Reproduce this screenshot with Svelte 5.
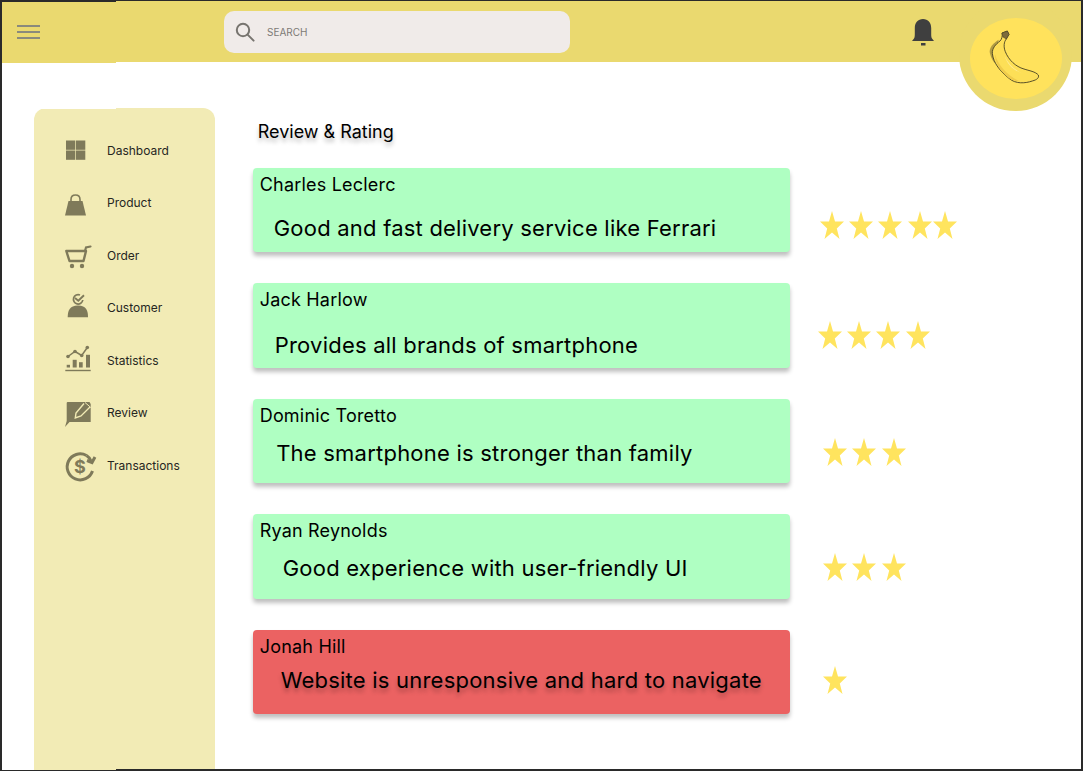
<script>
  const navItems = [
    { label: 'Dashboard', icon: 'grid' },
    { label: 'Product', icon: 'bag' },
    { label: 'Order', icon: 'cart' },
    { label: 'Customer', icon: 'person' },
    { label: 'Statistics', icon: 'chart' },
    { label: 'Review', icon: 'note' },
    { label: 'Transactions', icon: 'money' }
  ];

  // the mockup places every review line and star row by hand, so each one keeps its own offsets
  const reviews = [
    { name: 'Charles Leclerc', text: 'Good and fast delivery service like Ferrari', textX: 14, textY: 19, stars: 5, starsX: 30, starsY: 43 },
    { name: 'Jack Harlow', text: 'Provides all brands of smartphone', textX: 15, textY: 21, stars: 4, starsX: 28, starsY: 38 },
    { name: 'Dominic Toretto', text: 'The smartphone is stronger than family', textX: 16.500, textY: 13, stars: 3, starsX: 33.500, starsY: 39 },
    { name: 'Ryan Reynolds', text: 'Good experience with user-friendly UI', textX: 23, textY: 13, stars: 3, starsX: 33.500, starsY: 39 },
    { name: 'Jonah Hill', text: 'Website is unresponsive and hard to navigate', textX: 21, textY: 9, stars: 1, starsX: 33.500, starsY: 36, bad: true }
  ];
</script>

<div class="frame">
  <header class="topbar">
    <button class="menu" aria-label="Menu">
      <span></span><span></span><span></span>
    </button>
    <div class="search">
      <svg width="20" height="20" viewBox="0 0 20 20" fill="none" stroke="#77746f" stroke-width="2">
        <circle cx="8" cy="8" r="6.2" />
        <path d="M12.6 12.6 L18.6 18.6" stroke-linecap="round" />
      </svg>
      <span>SEARCH</span>
    </div>
    <svg class="bell" width="24" height="28" viewBox="0 0 24 28" fill="#3f3f3f">
      <path d="M1 23 L3 20.5 C3.6 19.5 3.8 18 3.8 16 L3.8 10 C3.8 4.500 7 1 12 1 C17 1 20.200 4.500 20.200 10 L20.200 16 C20.200 18 20.400 19.500 21 20.500 L23 23 Z" />
      <rect x="10" y="25" width="4.500" height="2.500" />
    </svg>
  </header>

  <div class="avatar">
    <div class="avatar-inner">
      <svg width="53.300" height="56.700" viewBox="45 35 160 170">
        <path d="M47 100 C47 85 58 75 74 64 L62 135 C53 122 48 110 47 100 Z" fill="#8f7f3a" opacity="0.7" />
        <path d="M84 44 L100 38 L105 48 L97 62 C90 70 88 85 94 100 C104 125 125 145 150 152 C165 157 185 160 193 170 C196 178 190 184 175 188 C155 195 125 198 105 180 C80 160 58 135 55 105 C54 90 65 78 78 68 C84 62 86 52 84 44 Z" fill="#fddf57" stroke="#3f3a20" stroke-width="2.600" />
        <path d="M63 108 C72 140 100 172 135 188 C115 190 100 176 88 164 C74 148 62 128 63 108 Z" fill="#efcb4b" />
        <path d="M92 112 C102 135 120 155 148 166 C125 160 100 142 92 112 Z" fill="#feeb96" />
        <path d="M84 44 L100 38 L105 48 L97 62 L87 56 Z" fill="#7d6c3c" stroke="#3f3a20" stroke-width="1.500" />
      </svg>
    </div>
  </div>

  <div class="body">
    <aside class="sidebar">
      <nav>
        {#each navItems as item}
          <a href="#top" class="nav-item">
            <svg class="nav-icon" width="30" height="32" viewBox="0 0 30 32" fill="#7f7a5a">
              {#if item.icon === 'grid'}
                <rect x="2" y="6.500" width="9.300" height="9.300" />
                <rect x="12" y="6.500" width="9.300" height="9.300" />
                <rect x="2" y="16.500" width="9.300" height="9.300" />
                <rect x="12" y="16.500" width="9.300" height="9.300" />
              {:else if item.icon === 'bag'}
                <path d="M4.500 14 L18.500 14 L22 28.500 L1 28.500 Z" />
                <path d="M7 15 L7 12.500 C7 9.500 9 8 11.500 8 C14 8 16 9.500 16 12.500 L16 15" fill="none" stroke="#7f7a5a" stroke-width="1.600" />
              {:else if item.icon === 'cart'}
                <path d="M2.300 12 L22 12 L19.500 22 L5.500 22 Z" fill="none" stroke="#7f7a5a" stroke-width="2.400" stroke-linejoin="round" />
                <path d="M21 12 L22 8.500 L26.500 7.500" fill="none" stroke="#7f7a5a" stroke-width="2.200" stroke-linecap="round" />
                <circle cx="8" cy="27" r="2.200" />
                <circle cx="18" cy="27" r="2.200" />
              {:else if item.icon === 'person'}
                <path d="M18.800 8 A4.700 4.700 0 1 1 16 3" fill="none" stroke="#7f7a5a" stroke-width="1.700" />
                <path d="M11 6 L14.300 8.700 L20 3.300" fill="none" stroke="#7f7a5a" stroke-width="1.900" />
                <path d="M3.700 25.300 C3.700 19 5.500 13.500 14 13.500 C22.500 13.500 24 19 24 25.300 Z" />
              {:else if item.icon === 'chart'}
                <rect x="1.300" y="25.800" width="25.400" height="1.400" />
                <rect x="2.700" y="20.800" width="3.300" height="2.700" />
                <rect x="8.700" y="15.800" width="4" height="7.700" />
                <rect x="15" y="18.200" width="3.700" height="5.300" />
                <rect x="22" y="10.800" width="4" height="12.700" />
                <path d="M4 12.500 L11 7.500 L17.700 11.500 L23.300 3.500" fill="none" stroke="#7f7a5a" stroke-width="1.500" />
                <circle cx="4" cy="12.500" r="1.800" />
                <circle cx="11" cy="7.500" r="1.800" />
                <circle cx="17.700" cy="11.500" r="1.800" />
                <circle cx="23.300" cy="3.500" r="1.800" />
              {:else if item.icon === 'note'}
                <path d="M2.700 6 Q2.700 5 3.700 5 L25.500 5 L26.700 7 L26.700 25 L5.500 25 L1 30 L2.700 24 Z" />
                <path d="M20 6.500 L12 16 L11.300 21 L17 19 L26 10" fill="none" stroke="#f2ebb5" stroke-width="1.400" />
                <path d="M21 5.500 L26.800 10.500" fill="none" stroke="#f2ebb5" stroke-width="1" />
              {:else}
                <path d="M22.500 6.500 A13 13 0 1 0 28.500 22" fill="none" stroke="#7f7a5a" stroke-width="3" />
                <path d="M22.500 6.500 C25 8 26 9.500 27 12" fill="none" stroke="#7f7a5a" stroke-width="3" />
                <path d="M23 11.500 L28 13.500 L31 8" fill="none" stroke="#7f7a5a" stroke-width="3" />
                <text x="16" y="24" text-anchor="middle" class="dollar">$</text>
              {/if}
            </svg>
            <span>{item.label}</span>
          </a>
        {/each}
      </nav>
    </aside>

    <main class="content">
      <h1>Review &amp; Rating</h1>
      <div class="rows">
        {#each reviews as review}
          <section class="row">
            <article class="card" class:bad={review.bad}>
              <div class="name">{review.name}</div>
              <p style:margin-left="{review.textX}px" style:margin-top="{review.textY}px">{review.text}</p>
            </article>
            <div class="stars" style:margin-left="{review.starsX}px" style:margin-top="{review.starsY}px">
              {#each Array(review.stars) as _}
                <svg width="24" height="28" viewBox="0 0 24 28" fill="#ffe45e">
                  <polygon points="12,0 15,10.500 24,10.500 16.800,17.500 19.500,28 12,21.500 4.500,28 7.200,17.500 0,10.500 9,10.500" />
                </svg>
              {/each}
            </div>
          </section>
        {/each}
      </div>
    </main>
  </div>
</div>

<style>
  :global(body) {
    margin: 0;
    font-family: Inter, "Liberation Sans", sans-serif;
    background: #fff;
  }

  .frame {
    position: relative;
    width: 1083px;
    height: 771px;
    box-sizing: border-box;
    border-left: 2px solid #2a2a2a;
    border-right: 2px solid #2a2a2a;
    border-top: 1px solid #2a2a2a;
    border-bottom: 1px solid #2a2a2a;
    overflow: hidden;
    display: flex;
    flex-direction: column;
  }

  /* the mockup is two artboards stitched at x=116, the left one sits 1px lower */
  .frame::before {
    content: '';
    position: absolute;
    left: 0;
    top: 0;
    width: 114px;
    height: 1px;
    background: #2a2a2a;
    z-index: 1;
  }

  .frame::after {
    content: '';
    position: absolute;
    left: 114px;
    right: 0;
    bottom: 0;
    height: 1px;
    background: #2a2a2a;
  }

  .topbar {
    position: relative;
    height: 61px;
    flex-shrink: 0;
    background: #ead96f;
    display: flex;
    align-items: center;
    padding-left: 15px;
  }

  .topbar::after {
    content: '';
    position: absolute;
    left: 0;
    bottom: -1px;
    width: 114px;
    height: 1px;
    background: #ead96f;
  }

  .menu {
    width: 23px;
    padding: 0;
    border: none;
    background: none;
    display: flex;
    flex-direction: column;
    gap: 4px;
  }

  .menu span {
    height: 2px;
    background: #8a8a7c;
  }

  .search {
    margin-left: 184px;
    width: 346px;
    height: 42px;
    background: #f0ebe9;
    border-radius: 10px;
    display: flex;
    align-items: center;
    padding-left: 11px;
    box-sizing: border-box;
    color: #7d7a76;
    font-size: 10px;
  }

  .search span {
    margin-left: 12px;
  }

  .bell {
    margin-left: 341px;
    margin-top: 1px;
  }

  .avatar {
    position: absolute;
    left: 957px;
    top: -3px;
    width: 113px;
    height: 113px;
    border-radius: 50%;
    background: #ead96f;
    display: flex;
    align-items: center;
    justify-content: center;
  }

  .avatar-inner {
    width: 92px;
    height: 81px;
    margin-top: 8px;
    border-radius: 50%;
    background: #ffe25c;
    display: flex;
    align-items: center;
    justify-content: center;
  }

  .body {
    flex: 1;
    display: flex;
    min-height: 0;
  }

  .sidebar {
    position: relative;
    width: 181px;
    margin: 46px 0 0 32px;
    background: #f2ebb5;
    border-radius: 12px 12px 0 0;
    padding-top: 26px;
    box-sizing: border-box;
  }

  .sidebar::before {
    content: '';
    position: absolute;
    left: 0;
    top: 0;
    width: 82px;
    height: 1px;
    background: #fff;
  }

  nav {
    display: flex;
    flex-direction: column;
    gap: 20.500px;
  }

  .nav-item {
    display: flex;
    align-items: center;
    height: 32px;
    padding-left: 30px;
    color: #26261f;
    font-size: 12px;
    text-decoration: none;
  }

  .nav-icon {
    margin-right: 13px;
    flex-shrink: 0;
    overflow: visible;
  }

  .content {
    flex: 1;
    padding: 59px 0 0 37.700px;
  }

  h1 {
    margin: 0 0 24.500px 5px;
    font-size: 18px;
    font-weight: 400;
    line-height: 22px;
    color: #000;
    text-shadow: 0 4px 4px rgba(0, 0, 0, 0.25);
  }

  .rows {
    display: flex;
    flex-direction: column;
    gap: 31px;
  }

  .row {
    display: flex;
    align-items: flex-start;
  }

  .card {
    width: 537px;
    height: 84.500px;
    box-sizing: border-box;
    padding: 6px 7px;
    background: #afffc2;
    border-radius: 4px;
    box-shadow: 0 4px 4px rgba(0, 0, 0, 0.25);
    color: #000;
  }

  .card.bad {
    background: #eb6262;
  }

  .card.bad p {
    text-shadow: 0 4px 4px rgba(0, 0, 0, 0.25);
  }

  .name {
    font-size: 18px;
    line-height: 22px;
    letter-spacing: 0.2px;
  }

  .card p {
    margin: 0;
    font-size: 22px;
    line-height: 27px;
    letter-spacing: 0.22px;
  }

  .stars {
    display: flex;
    gap: 5.300px;
  }

  .stars svg:nth-child(5) {
    margin-left: -4px;
  }

  .dollar {
    font-size: 18px;
    font-weight: 700;
    fill: #7f7a5a;
  }
</style>
